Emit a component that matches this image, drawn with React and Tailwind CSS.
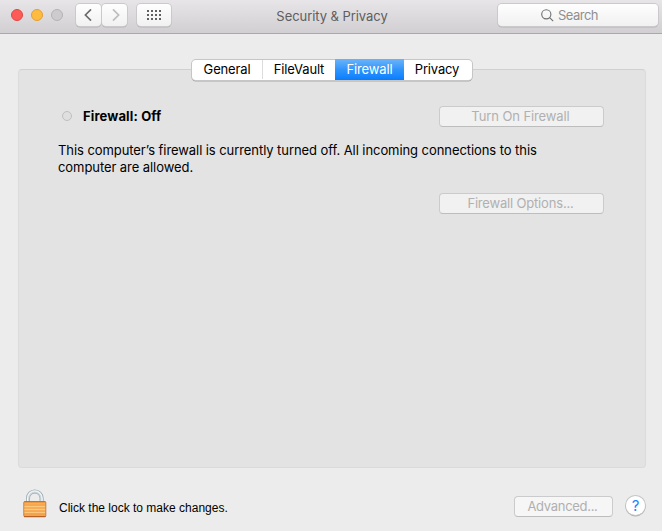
import React from 'react';
import { clsx } from 'clsx';

const tabs = [
  { name: 'General', width: 'w-[71px]' },
  { name: 'FileVault', width: 'w-[72px]' },
  { name: 'Firewall', width: 'w-[69px]' },
  { name: 'Privacy', width: 'w-[68px] pr-0.5' },
];

const gridDots = [0, 4, 8, 12].flatMap((x) => [0, 4, 8].map((y) => ({ x, y })));

const toolbarButton =
  'h-[22px] rounded-[4px] bg-linear-to-b from-[#fefefe] to-[#f1f1f1] shadow-[0_0_0_1px_#cbc9cb,0_1px_0_0.5px_#b5b3b5] flex items-center justify-center';

const LockIcon = () => (
  <svg width="24" height="29" viewBox="0 0 24 29" className="block">
    <defs>
      <linearGradient id="lockBody" x1="0" y1="0" x2="0" y2="1">
        <stop offset="0" stopColor="#f9a94b" />
        <stop offset="0.5" stopColor="#ffbd68" />
        <stop offset="1" stopColor="#f5a047" />
      </linearGradient>
    </defs>
    <path d="M5 13V9.2a6.8 6.8 0 0 1 13.6 0V13" fill="none" stroke="#98a2a9" strokeWidth="4" />
    <path d="M5 13V9.2a6.8 6.8 0 0 1 13.6 0V13" fill="none" stroke="#c9d4db" strokeWidth="2.8" />
    <path d="M4.6 12V9.2a7.2 7.2 0 0 1 14.4 0V12" fill="none" stroke="#f4f8fa" strokeWidth="1.2" />
    <rect x="0.8" y="12.5" width="22" height="15.2" rx="1" fill="url(#lockBody)" stroke="#bd7639" strokeWidth="0.9" />
    <path d="M1.4 12.8h20.8" stroke="#c96d20" />
    <path d="M1.5 16h20.6M1.5 19h20.6M1.5 22h20.6M1.5 25h20.6" stroke="#eb9a45" strokeWidth="0.8" />
    <path d="M1.5 17.5h20.6M1.5 20.5h20.6M1.5 23.5h20.6" stroke="#ffcd85" strokeWidth="0.8" />
    <path d="M1 27.6h21.6" stroke="#b55c22" />
  </svg>
);

const DisabledButton = ({ className, children }) => (
  <button
    disabled
    className={clsx(
      'h-[21px] pr-0.5 rounded-[4px] border border-[#cbcbcb] border-b-[#bdbdbd] text-[13px] leading-[19px] text-[#b0b0b0] text-center whitespace-nowrap',
      className
    )}
  >
    {children}
  </button>
);

const TitleBar = () => (
  <header className="h-[34px] shrink-0 border-b border-[#aaa8aa] bg-linear-to-b from-[#e7e5e7] to-[#d1cfd1] grid grid-cols-[192px_280px_190px]">
    <div className="flex items-start pt-1 pl-[11px]">
      <div className="flex gap-2 pt-[5px]">
        <span className="size-3 rounded-full border border-[#e2463f] bg-[#fc5b57]"></span>
        <span className="size-3 rounded-full border border-[#e1a032] bg-[#fdbc40]"></span>
        <span className="size-3 rounded-full border border-[#b5b3b5] bg-[#cdcbcd]"></span>
      </div>
      <div className="flex gap-px ml-[13px]">
        <button className={clsx(toolbarButton, 'w-[25px]')}>
          <svg width="8" height="12" viewBox="0 0 8 12" fill="none" stroke="#6b6b6b" strokeWidth="1.7" className="mr-px">
            <path d="M7 .4 1.4 6 7 11.6" />
          </svg>
        </button>
        <button className={clsx(toolbarButton, 'w-[25px]')}>
          <svg width="8" height="12" viewBox="0 0 8 12" fill="none" stroke="#bcbcbc" strokeWidth="1.7" className="ml-0.5">
            <path d="M1 .4 6.6 6 1 11.6" />
          </svg>
        </button>
      </div>
      <button className={clsx(toolbarButton, 'w-[34px] ml-[10px]')}>
        <svg width="14" height="10" viewBox="0 0 14 10" fill="#606060">
          {gridDots.map(({ x, y }) => (
            <rect key={`${x}-${y}`} x={x} y={y} width="2" height="2" />
          ))}
        </svg>
      </button>
    </div>
    <h1 className="text-center text-[13px] leading-[33px] text-[#5f5d5f] tracking-[-0.06px]">Security &amp; Privacy</h1>
    <div className="pt-1 pl-[26px]">
      <div className={clsx(toolbarButton, 'w-[160px] gap-1 pr-[17px]')}>
        <svg width="13" height="13" viewBox="0 0 13 13" fill="none" stroke="#6f6f6f" strokeWidth="1.1">
          <circle cx="5.3" cy="5.3" r="4.6" />
          <path d="m8.6 8.6 3.6 3.6" />
        </svg>
        <span className="text-[13px] leading-[22px] text-[#8f8f8f] tracking-[-0.5px]">Search</span>
      </div>
    </div>
  </header>
);

const TabBar = () => (
  <div className="relative z-10 flex h-[20px] w-[280px] mx-auto rounded-[4px] bg-white shadow-[0_0_0_1px_#c6c6c6,0_1px_0_0.5px_#a9a9a9]">
    {tabs.map((tab, i) => (
      <button
        key={tab.name}
        className={clsx(
          'text-[13px] leading-[19px] text-center tracking-[-0.15px]',
          tab.width,
          tab.name === 'Firewall'
            ? 'h-[21px] -mt-px pb-px bg-linear-to-b from-[#6bb3fa] via-[#2e95fc] to-[#047dff] text-white'
            : 'h-[19px] text-black',
          i === 0 && 'border-r border-[#dcdcdc]'
        )}
      >
        {tab.name}
      </button>
    ))}
  </div>
);

const App = () => {
  return (
    <div className="w-[662px] h-[531px] bg-[#ececec] overflow-hidden flex flex-col font-['Inter',sans-serif] text-black">
      <TitleBar />

      <main className="pt-[26px] pl-[18px]">
        <div className="w-[628px]">
          <TabBar />
        </div>
        <section className="-mt-[11px] w-[628px] h-[399px] rounded-[4px] border border-[#dbdbdb] border-t-[#d0d0d0] bg-[#e3e3e3] pt-[36px] pl-[39px] pr-[41px]">
          <div className="flex items-center justify-between">
            <div className="flex items-center pl-[4px]">
              <span className="size-[10px] -mt-px rounded-full border border-[#bfbfbf] bg-[#dfdfdf]"></span>
              <h2 className="ml-[11px] text-[13px] leading-[21px] font-bold tracking-[0.14px]">Firewall: Off</h2>
            </div>
            <DisabledButton className="w-[165px] bg-[#f1f1f1] tracking-[-0.1px]">Turn On Firewall</DisabledButton>
          </div>
          <p className="mt-[15px] text-[13px] leading-[17px] tracking-[-0.072px] whitespace-nowrap">
            This computer’s firewall is currently turned off. All incoming connections to this
            <br />
            computer are allowed.
          </p>
          <div className="mt-[17px] flex justify-end">
            <DisabledButton className="w-[165px] bg-[#f1f1f1] tracking-[-0.18px]">Firewall Options...</DisabledButton>
          </div>
        </section>
      </main>

      <footer className="flex items-start pt-[21px] pl-[23px]">
        <LockIcon />
        <p className="ml-[12px] mt-[10px] text-[12px] leading-[18px] font-['Liberation_Sans',sans-serif] w-[455px]">
          Click the lock to make changes.
        </p>
        <DisabledButton className="mt-[7px] w-[99px] bg-[#f6f6f6] tracking-[-0.3px]">Advanced...</DisabledButton>
        <button className="ml-[13px] mt-[7px] size-[19px] rounded-full bg-white shadow-[0_0_0_1px_#c4c4c4,0_1px_0_0.5px_#aeaeae] text-[15px] leading-[19px] text-[#1a86fb]">
          ?
        </button>
      </footer>
    </div>
  );
};

export default App;
